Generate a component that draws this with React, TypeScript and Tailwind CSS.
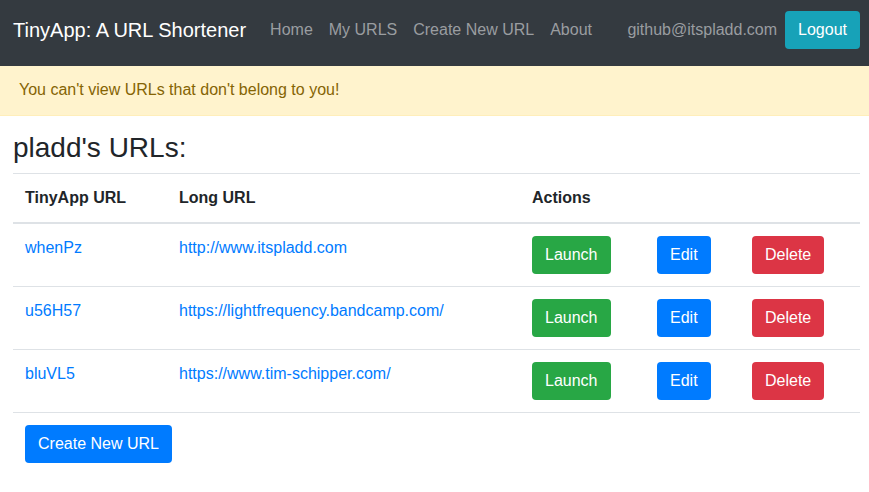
import React from "react";

const urls = [
  { short: "whenPz", long: "http://www.itspladd.com" },
  { short: "u56H57", long: "https://lightfrequency.bandcamp.com/" },
  { short: "bluVL5", long: "https://www.tim-schipper.com/" },
];

const btn = "inline-block rounded-[4px] border border-transparent px-3 py-[6px] text-base leading-6 text-white";

const App = () => {
  return (
    <div className="min-h-[492px] bg-white font-['Liberation_Sans',Arial,sans-serif] text-base leading-6 text-[#212529]">
      <nav className="flex h-[66px] items-center bg-[#343a40] pb-[6px] pl-[13px] pr-[9px]">
        <a className="mr-4 text-[20px] leading-[30px] text-white">TinyApp: A URL Shortener</a>
        <ul className="flex items-center">
          <li><a className="block px-2 text-[#9a9da0]">Home</a></li>
          <li><a className="block px-2 text-[#9a9da0]">My URLS</a></li>
          <li><a className="block px-2 text-[#9a9da0]">Create New URL</a></li>
          <li><a className="block px-2 text-[#9a9da0]">About</a></li>
        </ul>
        <div className="ml-auto flex items-center gap-2">
          <span className="text-[#9a9da0]">github@itspladd.com</span>
          <button className={`${btn} bg-[#17a2b8]`}>Logout</button>
        </div>
      </nav>

      <div className="h-[50px] border-b border-[#ffeeba] bg-[#fff3cd] px-[19px] py-[12px] text-[#856404]">
        You can't view URLs that don't belong to you!
      </div>

      <main className="pl-[13px] pr-[9px]">
        <h3 className="mt-[15px] mb-2 text-[28px] leading-[1.2]">pladd's URLs:</h3>
        <table className="w-full border-collapse text-left">
          <thead>
            <tr className="border-t border-b-2 border-t-[#dee2e6] border-b-[#dee2e6]">
              <th className="w-[154px] p-3 font-bold">TinyApp URL</th>
              <th className="w-[353px] p-3 font-bold">Long URL</th>
              <th colSpan={3} className="p-3 font-bold">Actions</th>
            </tr>
          </thead>
          <tbody>
            {urls.map((u) => (
              <tr key={u.short} className="border-b border-[#dee2e6] align-top">
                <td className="p-3"><a className="text-[#007bff]">{u.short}</a></td>
                <td className="p-3"><a className="text-[#007bff]">{u.long}</a></td>
                <td className="w-[125px] p-3">
                  <button className={`${btn} bg-[#28a745]`}>Launch</button>
                </td>
                <td className="w-[95px] p-3">
                  <button className={`${btn} bg-[#007bff]`}>Edit</button>
                </td>
                <td className="p-3">
                  <button className={`${btn} bg-[#dc3545]`}>Delete</button>
                </td>
              </tr>
            ))}
          </tbody>
        </table>
        <div className="mt-3 ml-3">
          <button className={`${btn} bg-[#007bff]`}>Create New URL</button>
        </div>
      </main>
    </div>
  );
};

export default App;
